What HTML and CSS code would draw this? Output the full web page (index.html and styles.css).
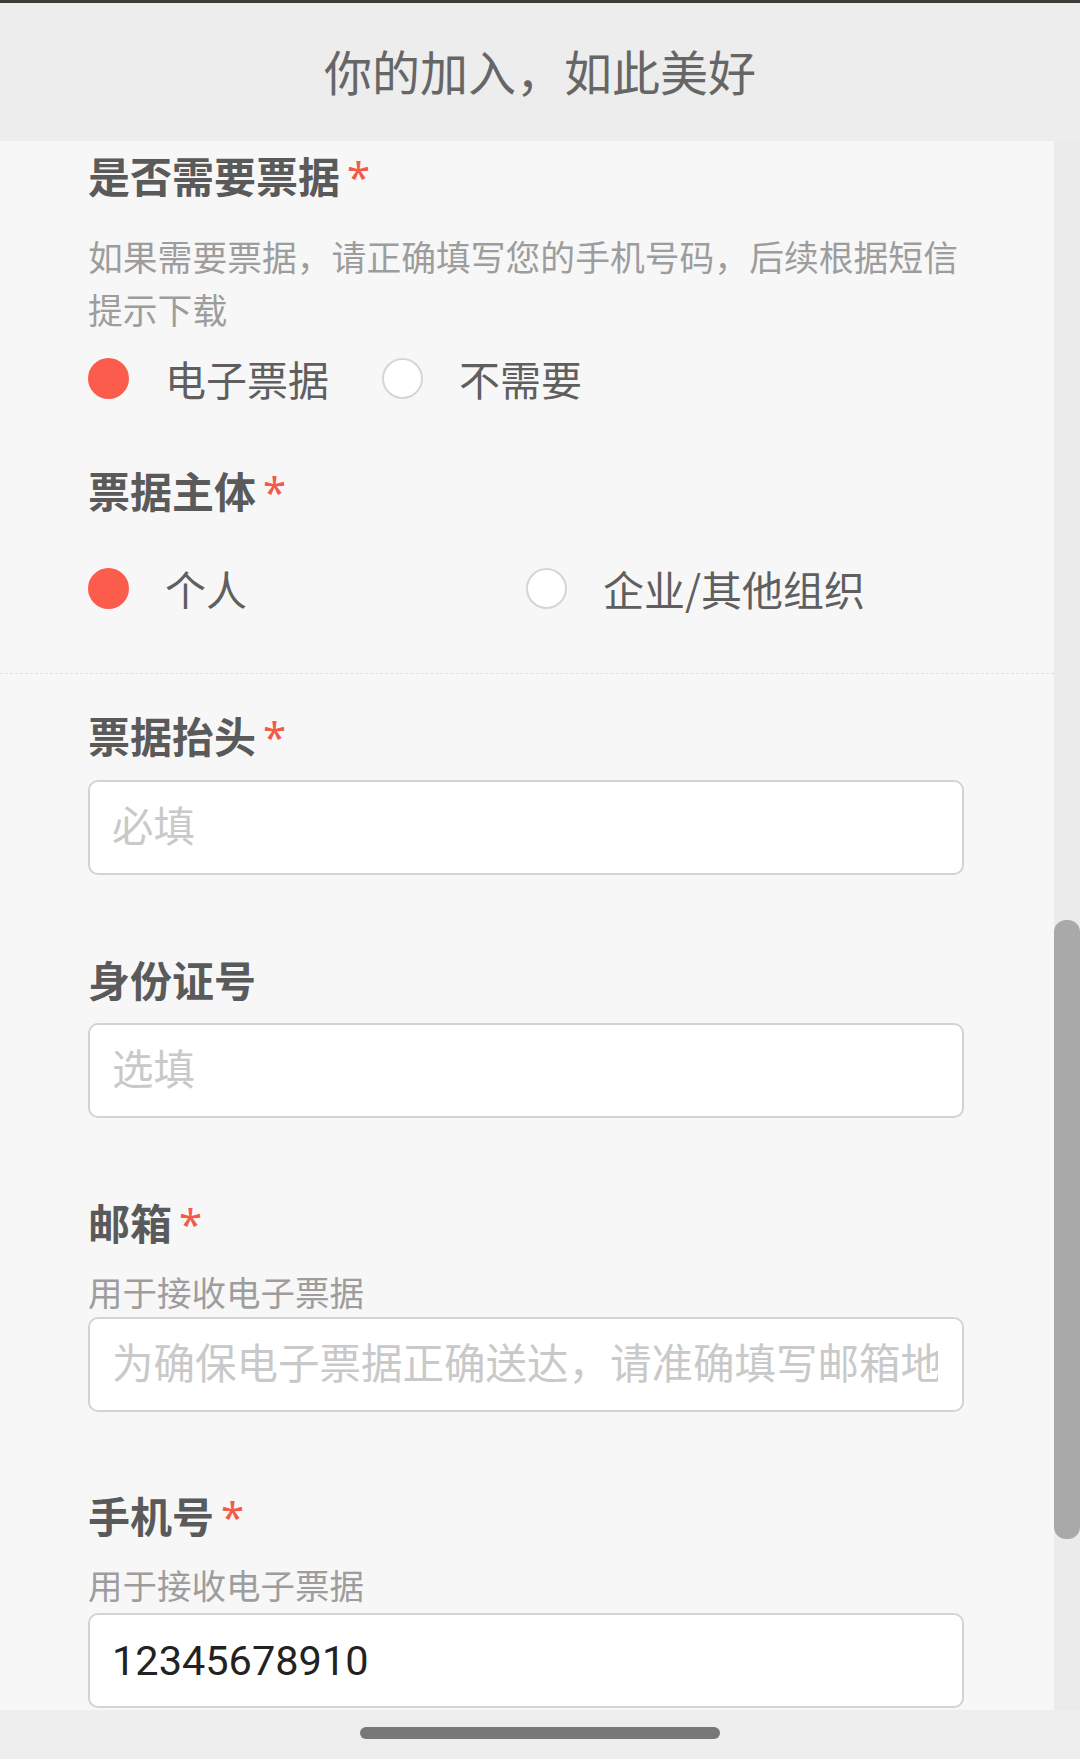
FILE: index.html
```html
<!DOCTYPE html>
<html lang="zh-CN">
<head>
<meta charset="utf-8">
<title>你的加入，如此美好</title>
<link rel="stylesheet" href="styles.css">
</head>
<body>
<header class="topbar">
  <h1 class="title">你的加入，如此美好</h1>
</header>
<main class="viewport">
  <div class="form">
    <section class="block block-invoice">
      <div class="label">是否需要票据<span class="req">*</span></div>
      <p class="desc">如果需要票据，请正确填写您的手机号码，后续根据短信提示下载</p>
      <div class="radio-row">
        <label class="radio"><span class="dot checked"></span><span class="radio-text">电子票据</span></label>
        <label class="radio"><span class="dot"></span><span class="radio-text">不需要</span></label>
      </div>
      <div class="label label-gap">票据主体<span class="req">*</span></div>
      <div class="radio-grid">
        <label class="radio"><span class="dot checked"></span><span class="radio-text">个人</span></label>
        <label class="radio"><span class="dot"></span><span class="radio-text">企业/其他组织</span></label>
      </div>
    </section>
    <section class="block block-fields">
      <div class="field">
        <div class="label">票据抬头<span class="req">*</span></div>
        <input class="input" type="text" placeholder="必填">
      </div>
      <div class="field">
        <div class="label">身份证号</div>
        <input class="input" type="text" placeholder="选填">
      </div>
      <div class="field">
        <div class="label">邮箱<span class="req">*</span></div>
        <div class="hint">用于接收电子票据</div>
        <input class="input input-hinted" type="text" placeholder="为确保电子票据正确送达，请准确填写邮箱地址">
      </div>
      <div class="field">
        <div class="label">手机号<span class="req">*</span></div>
        <div class="hint">用于接收电子票据</div>
        <input class="input input-hinted" type="text" value="12345678910">
      </div>
    </section>
  </div>
  <div class="scrolltrack"><div class="scrollthumb"></div></div>
</main>
<footer class="navbar"><div class="handle"></div></footer>
</body>
</html>
```

FILE: styles.css
```css
* { box-sizing: border-box; }

html, body {
  margin: 0;
  padding: 0;
}

body {
  width: 1080px;
  height: 1759px;
  overflow: hidden;
  background: #f7f7f7;
  font-family: "Noto Sans CJK SC", "Noto Sans", sans-serif;
  color: #5b5b5b;
}

.topbar {
  height: 141px;
  border-top: 3px solid #3b3e37;
  background: #ededed;
  display: flex;
  align-items: center;
  justify-content: center;
  padding-bottom: 5px;
}

.title {
  margin: 0;
  font-size: 48px;
  font-weight: 400;
  line-height: 60px;
  color: #666666;
}

.viewport {
  height: 1569px;
  overflow: hidden;
  display: flex;
}

.form {
  flex: 1;
  min-width: 0;
}

.block {
  padding-left: 88px;
  padding-right: 90px;
}

.block-invoice {
  padding-top: 10px;
  padding-bottom: 55px;
  border-bottom: 1px dashed #e2e2e2;
}

.block-fields {
  padding-top: 37px;
}

.label {
  font-size: 42px;
  font-weight: 700;
  line-height: 48px;
  color: #5a5a5a;
}

.label-gap {
  margin-top: 58px;
}

.req {
  margin-left: 7px;
  color: #f45a4a;
  font-family: "Noto Sans", sans-serif;
  font-weight: 400;
}

.desc {
  margin: 29px -8px 0 0;
  font-size: 34.8px;
  line-height: 53px;
  color: #9d9d9d;
}

.radio-row {
  margin-top: 12px;
  height: 60px;
  display: flex;
  align-items: center;
}

.radio-grid {
  margin-top: 42px;
  height: 60px;
  display: grid;
  grid-template-columns: 1fr 1fr;
  align-items: center;
}

.radio {
  display: flex;
  align-items: center;
  margin-right: 53px;
}

.dot {
  width: 41px;
  height: 41px;
  border-radius: 50%;
  background: #ffffff;
  border: 2px solid #d5d5d5;
  flex: none;
}

.dot.checked {
  background: #fb5c4b;
  border-color: #fb5c4b;
}

.radio-text {
  margin-left: 36px;
  font-size: 41px;
  line-height: 60px;
  color: #5f5f5f;
}

.field + .field {
  margin-top: 80px;
}

.field:last-child {
  margin-top: 79px;
}

.hint {
  margin-top: 23px;
  font-size: 34.5px;
  line-height: 40px;
  color: #9d9d9d;
}

.input {
  display: block;
  width: 100%;
  height: 95px;
  margin-top: 19px;
  padding: 0 24px 0 22px;
  border: 2px solid #d3d3d3;
  border-radius: 10px;
  background: #ffffff;
  font-family: Roboto, "Noto Sans CJK SC", sans-serif;
  font-size: 41.5px;
  color: #222222;
  outline: none;
}

.input::placeholder {
  color: #c9c9c9;
  font-family: "Noto Sans CJK SC", sans-serif;
}

.input-hinted {
  margin-top: 6px;
}

.field:last-child .input-hinted {
  margin-top: 9px;
}

.field:nth-child(2) .input {
  margin-top: 20px;
}

.scrolltrack {
  width: 26px;
  flex: none;
  background: #ebebeb;
}

.scrollthumb {
  margin-top: 779px;
  height: 619px;
  background: #a9a9a9;
  border-radius: 12px;
}

.navbar {
  height: 49px;
  background: #eeeeee;
  display: flex;
  justify-content: center;
  padding-top: 17px;
}

.handle {
  width: 360px;
  height: 12px;
  border-radius: 6px;
  background: #787878;
}
```
